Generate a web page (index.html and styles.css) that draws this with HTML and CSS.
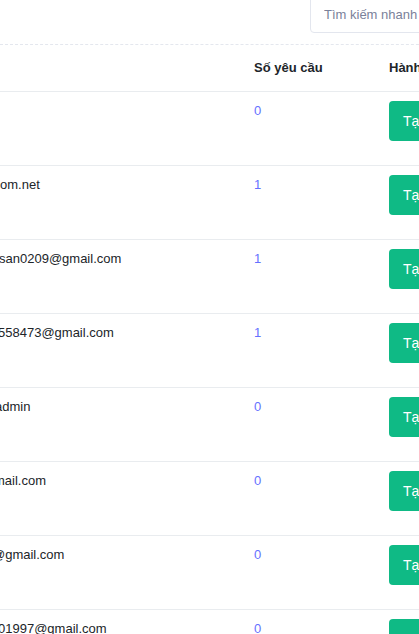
FILE: index.html
```html
<!DOCTYPE html>
<html lang="vi">
<head>
<meta charset="utf-8">
<title>Danh sách khách hàng</title>
<link rel="stylesheet" href="styles.css">
</head>
<body>
<div class="toolbar">
  <input class="search" type="text" placeholder="Tìm kiếm nhanh">
</div>
<table class="list">
  <colgroup>
    <col class="c-email">
    <col class="c-count">
    <col class="c-action">
  </colgroup>
  <thead>
    <tr><th></th><th>Số yêu cầu</th><th>Hành động</th></tr>
  </thead>
  <tbody>
    <tr><td class="email"></td><td class="num">0</td><td><button class="btn">Tạo yêu cầu</button></td></tr>
    <tr><td class="email">om.net</td><td class="num">1</td><td><button class="btn">Tạo yêu cầu</button></td></tr>
    <tr><td class="email i1">san0209@gmail.com</td><td class="num">1</td><td><button class="btn">Tạo yêu cầu</button></td></tr>
    <tr><td class="email i2">558473@gmail.com</td><td class="num">1</td><td><button class="btn">Tạo yêu cầu</button></td></tr>
    <tr><td class="email i5">admin</td><td class="num">0</td><td><button class="btn">Tạo yêu cầu</button></td></tr>
    <tr><td class="email i6">mail.com</td><td class="num">0</td><td><button class="btn">Tạo yêu cầu</button></td></tr>
    <tr><td class="email i8">@gmail.com</td><td class="num">0</td><td><button class="btn">Tạo yêu cầu</button></td></tr>
    <tr><td class="email i2">01997@gmail.com</td><td class="num">0</td><td><button class="btn">Tạo yêu cầu</button></td></tr>
  </tbody>
</table>
</body>
</html>
```
FILE: styles.css
```css
html, body {
  margin: 0;
  padding: 0;
  overflow: hidden;
  background: #ffffff;
}
body {
  font-family: "Liberation Sans", Arial, sans-serif;
  font-size: 13px;
  color: #212529;
}
.toolbar {
  display: flex;
  padding: 0 0 11px 310px;
  border-bottom: 1px dashed #e4e7ee;
  width: 600px;
}
.search {
  box-sizing: border-box;
  width: 200px;
  height: 38px;
  margin-top: -5px;
  flex: none;
  padding: 0 13px;
  border: 1px solid #e3e6ee;
  border-radius: 4px;
  font-family: "Liberation Sans", Arial, sans-serif;
  font-size: 13px;
  color: #212529;
  outline: none;
}
.search::placeholder {
  color: #7a819a;
}
.list {
  table-layout: fixed;
  border-collapse: collapse;
  width: 600px;
}
.c-email { width: 254px; }
.c-count { width: 135px; }
.c-action { width: 211px; }
.list th {
  text-align: left;
  font-weight: bold;
  padding: 13px 0;
  line-height: 20px;
  height: 20px;
  border-bottom: 1px solid #e9ecef;
  white-space: nowrap;
}
.list td {
  vertical-align: top;
  padding: 9px 0 0 0;
  height: 64px;
  line-height: 20px;
  border-bottom: 1px solid #e9ecef;
  white-space: nowrap;
}
.email { text-indent: 0; }
.i1 { text-indent: -1px; }
.i2 { text-indent: -2px; }
.i5 { text-indent: -5px; }
.i6 { text-indent: -6px; }
.i8 { text-indent: -8px; }
.num {
  color: #6571ff;
}
.btn {
  display: block;
  margin-top: 0;
  height: 40px;
  padding: 0 14px;
  border: none;
  border-radius: 4px;
  background: #0fba85;
  color: #ffffff;
  font-family: "Liberation Sans", Arial, sans-serif;
  font-size: 14px;
  white-space: nowrap;
}
```
